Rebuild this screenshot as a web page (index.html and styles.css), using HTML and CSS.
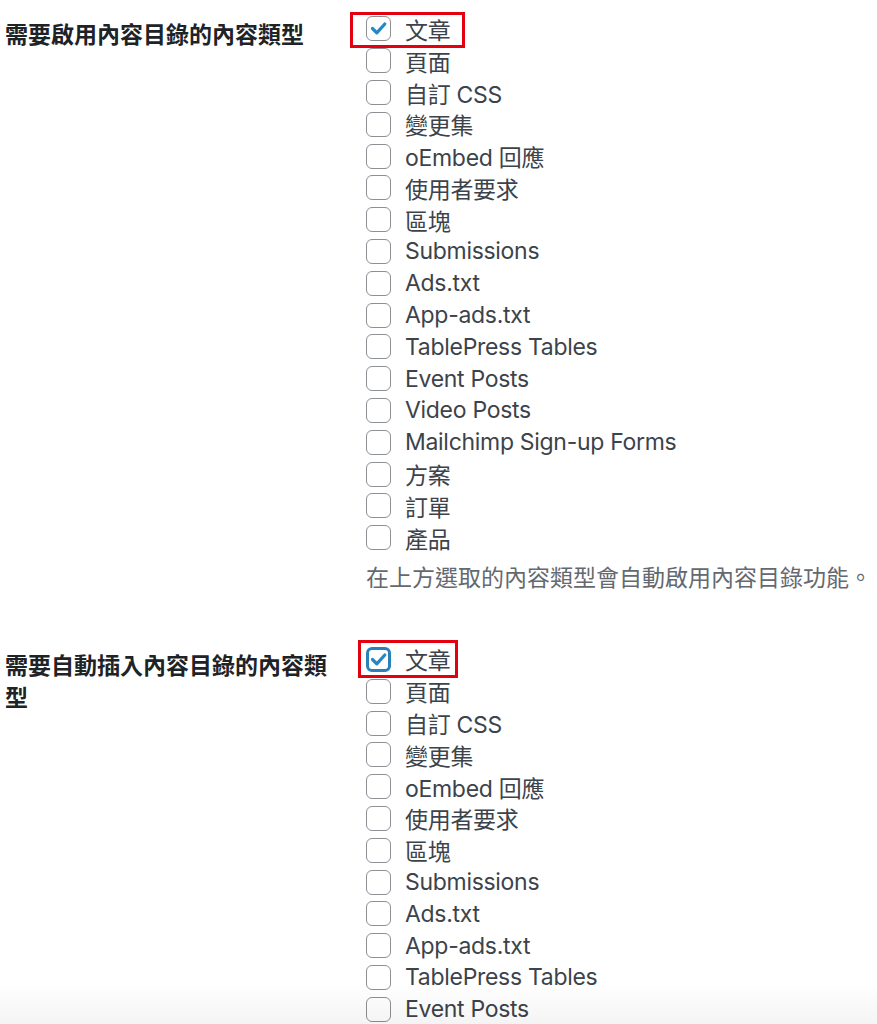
FILE: index.html
```html
<!DOCTYPE html>
<html lang="zh-Hant">
<head>
    <meta charset="UTF-8">
    <meta name="viewport" content="width=device-width, initial-scale=1.0">
    <title>內容目錄設定</title>
    <link rel="stylesheet" href="styles.css">
</head>
<body>
    <div class="form-table">

        <!-- Post types where the TOC is enabled -->
        <div class="form-row">
            <div class="form-label">需要啟用內容目錄的內容類型</div>
            <div class="form-field">
                <fieldset>
                    <label class="option mark mark-first"><span class="check is-checked"><svg viewBox="0 0 25 25"><polyline points="6.5,12.5 10.8,16.8 18.8,8"/></svg></span>文章</label>
                    <label class="option"><span class="check"></span>頁面</label>
                    <label class="option"><span class="check"></span>自訂 CSS</label>
                    <label class="option"><span class="check"></span>變更集</label>
                    <label class="option"><span class="check"></span>oEmbed 回應</label>
                    <label class="option"><span class="check"></span>使用者要求</label>
                    <label class="option"><span class="check"></span>區塊</label>
                    <label class="option"><span class="check"></span>Submissions</label>
                    <label class="option"><span class="check"></span>Ads.txt</label>
                    <label class="option"><span class="check"></span>App-ads.txt</label>
                    <label class="option"><span class="check"></span>TablePress Tables</label>
                    <label class="option"><span class="check"></span>Event Posts</label>
                    <label class="option"><span class="check"></span>Video Posts</label>
                    <label class="option"><span class="check"></span>Mailchimp Sign-up Forms</label>
                    <label class="option"><span class="check"></span>方案</label>
                    <label class="option"><span class="check"></span>訂單</label>
                    <label class="option"><span class="check"></span>產品</label>
                </fieldset>
                <p class="description">在上方選取的內容類型會自動啟用內容目錄功能。</p>
            </div>
        </div>

        <!-- Post types where the TOC is inserted automatically -->
        <div class="form-row">
            <div class="form-label">需要自動插入內容目錄的內容類型</div>
            <div class="form-field">
                <fieldset>
                    <label class="option mark mark-second"><span class="check is-checked is-focused"><svg viewBox="0 0 25 25"><polyline points="6.5,12.5 10.8,16.8 18.8,8"/></svg></span>文章</label>
                    <label class="option"><span class="check"></span>頁面</label>
                    <label class="option"><span class="check"></span>自訂 CSS</label>
                    <label class="option"><span class="check"></span>變更集</label>
                    <label class="option"><span class="check"></span>oEmbed 回應</label>
                    <label class="option"><span class="check"></span>使用者要求</label>
                    <label class="option"><span class="check"></span>區塊</label>
                    <label class="option"><span class="check"></span>Submissions</label>
                    <label class="option"><span class="check"></span>Ads.txt</label>
                    <label class="option"><span class="check"></span>App-ads.txt</label>
                    <label class="option"><span class="check"></span>TablePress Tables</label>
                    <label class="option"><span class="check"></span>Event Posts</label>
                    <label class="option"><span class="check"></span>Video Posts</label>
                    <label class="option"><span class="check"></span>Mailchimp Sign-up Forms</label>
                    <label class="option"><span class="check"></span>方案</label>
                    <label class="option"><span class="check"></span>訂單</label>
                    <label class="option"><span class="check"></span>產品</label>
                </fieldset>
                <p class="description">在上方選取的內容類型會自動插入內容目錄。</p>
            </div>
        </div>

    </div>
</body>
</html>
```

FILE: styles.css
```css
body {
    margin: 0;
    padding: 0;
    background-color: #fff;
    color: #3c434a;
    font-family: Inter, "Noto Sans CJK TC", sans-serif;
    font-size: 23px;
}

/* soft shade along the bottom edge of the window */
body::after {
    content: "";
    position: fixed;
    left: 0;
    right: 0;
    bottom: 0;
    height: 40px;
    background: linear-gradient(rgba(0, 0, 0, 0), rgba(0, 0, 0, 0.045));
    pointer-events: none;
}

.form-table {
    padding-left: 5px;
}

.form-row {
    display: grid;
    grid-template-columns: 361px 1fr;
    padding: 13px 0 37px;
}

.form-label {
    padding: 6px 31px 0 0;
    font-weight: bold;
    color: #1d2327;
    line-height: 32px;
}

fieldset {
    margin: 0;
    padding: 0;
    border: none;
}

.option {
    display: flex;
    align-items: center;
    width: fit-content;
    height: 31.8px;
    position: relative;
    letter-spacing: -0.3px;
}

.check {
    box-sizing: border-box;
    width: 25px;
    height: 25px;
    margin-right: 14px;
    border: 1.5px solid #8c8f94;
    border-radius: 6px;
    background-color: #fff;
    display: flex;
    align-items: center;
    justify-content: center;
}

.check svg {
    width: 25px;
    height: 25px;
    flex: none;
    fill: none;
    stroke: #2587c4;
    stroke-width: 3.2;
    stroke-linecap: round;
    stroke-linejoin: round;
}

.check.is-focused {
    border: 3px solid #2a80b9;
}

/* red annotation frames */
.mark::after {
    content: "";
    position: absolute;
    border: 3px solid #e3000f;
    pointer-events: none;
}

.mark-first::after {
    left: -16px;
    right: -15px;
    top: -1px;
    bottom: -3px;
}

.mark-second::after {
    left: -8px;
    right: -8px;
    top: -4px;
    bottom: -3px;
}

.description {
    margin: 8px 0 0;
    color: #646970;
    line-height: 32px;
    white-space: nowrap;
}
```
